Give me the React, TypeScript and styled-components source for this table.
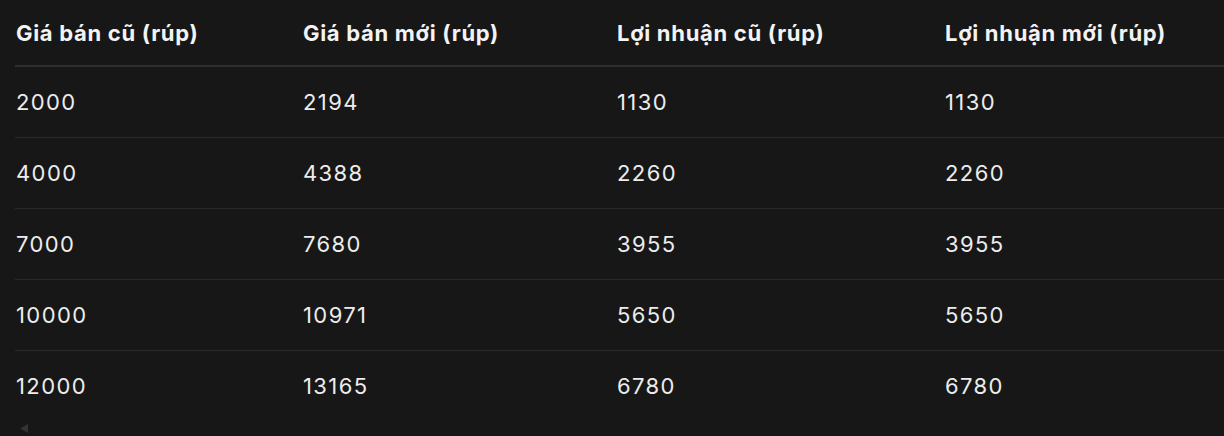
import React from "react";
import styled, { createGlobalStyle } from "styled-components";

const GlobalStyle = createGlobalStyle`
  html, body {
    margin: 0;
    padding: 0;
    background: #171717;
  }
  body {
    font-family: Inter, "Noto Sans", sans-serif;
    color: #ececec;
  }
`;

const Page = styled.div`
  width: 1224px;
  height: 436px;
  overflow: hidden;
  display: flex;
  flex-direction: column;
  padding-left: 15px;
  box-sizing: border-box;
`;

const Table = styled.table`
  width: 1209px;
  border-collapse: collapse;
  table-layout: fixed;
  font-size: 22px;
`;

const HeadCell = styled.th<{ $w?: number }>`
  width: ${(p) => (p.$w ? `${p.$w}px` : "auto")};
  height: 65px;
  padding: 0 0 0 1px;
  text-align: left;
  font-weight: 700;
  letter-spacing: 0.7px;
  color: #f3f3f3;
  border-bottom: 2px solid #2e2e2e;
  white-space: nowrap;
`;

const Row = styled.tr`
  border-bottom: 1px solid #2a2a2a;
  &:last-child {
    border-bottom: none;
  }
`;

const Cell = styled.td`
  height: 70px;
  padding: 0 0 0 1px;
  font-weight: 400;
  letter-spacing: 1.4px;
  color: #ececec;
`;

const ScrollBar = styled.div`
  margin-top: auto;
  height: 14px;
  display: flex;
  align-items: center;
  padding-left: 4px;
  padding-bottom: 1px;
`;

const columns = [
  { title: "Giá bán cũ (rúp)", w: 286 },
  { title: "Giá bán mới (rúp)", w: 313 },
  { title: "Lợi nhuận cũ (rúp)", w: 327 },
  { title: "Lợi nhuận mới (rúp)" },
];

const rows = [
  ["2000", "2194", "1130", "1130"],
  ["4000", "4388", "2260", "2260"],
  ["7000", "7680", "3955", "3955"],
  ["10000", "10971", "5650", "5650"],
  ["12000", "13165", "6780", "6780"],
];

const LeftArrow = () => (
  <svg width="10" height="9" viewBox="0 0 10 9">
    <path d="M1 4.5 L9 0 L9 9 Z" fill="#333" />
  </svg>
);

export default function App() {
  return (
    <>
      <GlobalStyle />
      <Page>
        <Table>
          <thead>
            <tr>
              {columns.map((c) => (
                <HeadCell key={c.title} $w={c.w}>
                  {c.title}
                </HeadCell>
              ))}
            </tr>
          </thead>
          <tbody>
            {rows.map((r, i) => (
              <Row key={i}>
                {r.map((v, j) => (
                  <Cell key={j}>{v}</Cell>
                ))}
              </Row>
            ))}
          </tbody>
        </Table>
        <ScrollBar>
          <LeftArrow />
        </ScrollBar>
      </Page>
    </>
  );
}
